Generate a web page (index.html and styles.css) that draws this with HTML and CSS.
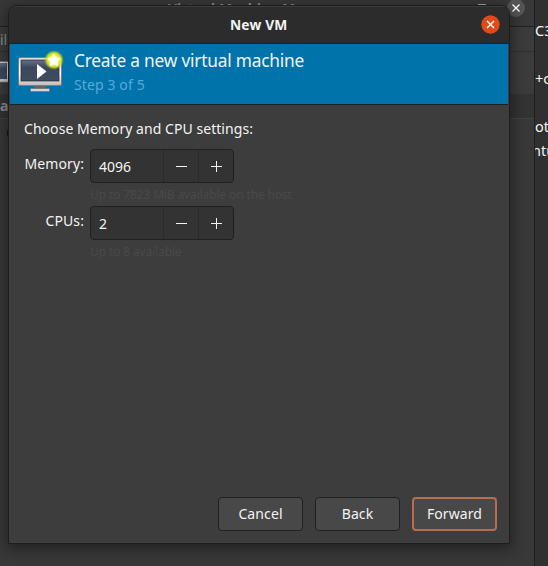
FILE: index.html
```
<!DOCTYPE html>
<html lang="en">
<head>
<meta charset="utf-8">
<title>New VM</title>
<link rel="stylesheet" href="styles.css">
</head>
<body>
<svg width="0" height="0" class="defs" aria-hidden="true">
  <defs>
    <linearGradient id="frame" x1="0" y1="0" x2="0" y2="1"><stop offset="0" stop-color="#dddddd"/><stop offset=".55" stop-color="#ffffff"/><stop offset="1" stop-color="#bdbdbd"/></linearGradient>
    <linearGradient id="screen" x1="0" y1="0" x2="0" y2="1"><stop offset="0" stop-color="#66728a"/><stop offset=".35" stop-color="#3c475c"/><stop offset="1" stop-color="#414c61"/></linearGradient>
    <radialGradient id="glow"><stop offset=".5" stop-color="#f2f53a"/><stop offset=".72" stop-color="#d9e41c" stop-opacity=".9"/><stop offset="1" stop-color="#a5c52d" stop-opacity="0"/></radialGradient>
    <symbol id="monitor" viewBox="0 0 48 44">
      <path d="M17 34h10l1 5H16z" fill="#666"/>
      <rect x="12.500" y="37.500" width="19" height="3" rx="1" fill="#d4d4d2" stroke="#777b7c"/>
      <rect x=".5" y="6.500" width="43" height="28" rx="1.500" fill="url(#frame)" stroke="#7b7d80"/>
      <rect x="3" y="9" width="38" height="21" fill="url(#screen)" stroke="#20293a" stroke-width=".7"/>
      <path d="M19 13v15l9.500-7.500z" fill="#fff"/>
    </symbol>
  </defs>
</svg>
<div class="desktop">
  <div class="terminal">
    <span>C3</span><span>+c</span><span>ot</span><span>ntu</span>
  </div>
  <section class="manager">
    <header class="manager-title"><span class="manager-name">Virtual Machine Manager</span><i class="minimize"></i>
      <svg class="manager-close" viewBox="0 0 18 18"><circle cx="9" cy="9" r="9"/><path d="M5.500 5.500l7 7m0-7l-7 7"/></svg>
    </header>
    <div class="manager-menu">il</div>
    <div class="manager-tools"><svg class="tool-monitor"><use href="#monitor"/></svg></div>
    <div class="manager-columns">a</div>
    <div class="manager-list">Q</div>
  </section>
  <main class="dialog">
    <header class="titlebar"><h1>New VM</h1>
      <svg class="close" viewBox="0 0 19 19"><circle cx="9.500" cy="9.500" r="9.200"/><path d="M6 6l7 7m0-7l-7 7"/></svg>
    </header>
    <div class="banner">
      <svg class="vm-icon" viewBox="0 0 48 44">
        <use href="#monitor"/>
        <circle cx="36" cy="9" r="10" fill="url(#glow)"/>
        <path d="M36 3l1.900 3.900 4.300.6-3.100 3 .7 4.300-3.800-2-3.800 2 .7-4.300-3.100-3 4.300-.6z" fill="#fff" stroke="#fff" stroke-linejoin="round"/>
      </svg>
      <div><h2>Create a new virtual machine</h2><p class="step">Step 3 of 5</p></div>
    </div>
    <div class="content">
      <p class="prompt">Choose Memory and CPU settings:</p>
      <div class="fields">
        <label>Memory:</label>
        <div class="spin"><span class="value">4096</span><span class="control minus"></span><span class="control plus"></span></div>
        <p class="hint">Up to 7823 MiB available on the host</p>
        <label>CPUs:</label>
        <div class="spin"><span class="value">2</span><span class="control minus"></span><span class="control plus"></span></div>
        <p class="hint">Up to 8 available</p>
      </div>
    </div>
    <footer class="actions">
      <button>Cancel</button><button>Back</button><button class="forward">Forward</button>
    </footer>
  </main>
</div>
</body>
</html>
```
FILE: styles.css
```
* { box-sizing: border-box; }
body { margin: 0; font-family: "Noto Sans", sans-serif; font-size: 14px; color: #f3f3f3; }
h1, h2, p { margin: 0; font-weight: 400; white-space: nowrap; }
.defs { position: absolute; }
.desktop { position: relative; width: 548px; height: 566px; overflow: hidden; background: #303030; }
.terminal { position: absolute; left: 535px; top: 18px; display: flex; flex-direction: column; font-size: 14.5px; line-height: 24px; }
.terminal span:nth-child(2) { margin-top: 24px; }
.terminal span:nth-child(3) { margin-top: 24px; }
.terminal span:nth-child(4) { margin-left: -3px; }
.manager { position: absolute; left: 0; top: 0; width: 535px; height: 566px; background: #383838; border-right: 1px solid #1e1e1e; overflow: hidden; color: #8d8d8d; }
.manager-title { position: relative; height: 27px; background: #383838; border-bottom: 1px solid #202020; }
.manager-name { position: absolute; left: 168px; top: 0; font-weight: 700; line-height: 18px; }
.minimize { position: absolute; left: 478px; top: 4px; width: 8px; height: 1px; background: #aaa; }
.manager-close { position: absolute; left: 507px; top: -1px; width: 18px; height: 18px; }
.manager-close circle { fill: #555; }
.manager-close path, .close path { fill: none; stroke: #fff; stroke-width: 1.4; }
.manager-menu { height: 25px; line-height: 25px; background: #3b3b3b; border-bottom: 1px solid #303030; }
.manager-tools { height: 42px; padding-top: 5px; background: #3b3b3b; }
.tool-monitor { display: block; width: 35px; height: 32px; margin-left: -23px; }
.manager-columns { height: 25px; line-height: 23px; background: #333; border-bottom: 1px solid #414141; font-weight: 700; }
.manager-list { padding: 4px 0 0 6px; color: #111; line-height: 19px; }
.dialog { position: absolute; left: 8px; top: 5px; width: 502px; height: 539px; display: flex; flex-direction: column; border: 1px solid #1d1d1d; border-radius: 9px 9px 0 0; background: #3d3d3d; box-shadow: 0 3px 14px 2px rgba(0,0,0,.4); overflow: hidden; }
.titlebar { display: flex; align-items: center; justify-content: flex-end; height: 38px; padding: 0 9px 2px 221px; background: #2c2c2c; border-top: 1px solid #3c3c3c; border-bottom: 1px solid #202020; }
.titlebar h1 { flex: 1; font-size: 13.8px; font-weight: 700; line-height: 20px; letter-spacing: .15px; padding-top: 1px; }
.close { width: 19px; height: 19px; }
.close circle { fill: #e14a19; }
.banner { display: flex; height: 61px; margin: 0 1px; padding: 8px 0 0 8px; background: #0073aa; border-bottom: 1px solid #202020; flex: none; }
.vm-icon { width: 48px; height: 44px; margin-right: 8px; flex: none; overflow: visible; margin-top: -1px; }
.banner h2 { font-size: 17.3px; line-height: 20px; margin-top: -1px; letter-spacing: -.2px; }
.step { font-size: 14px; line-height: 20px; margin-top: 4px; letter-spacing: .12px; color: #57a9d9; }
.content { flex: 1; padding: 14px 15px; }
.prompt { line-height: 20px; letter-spacing: .05px; }
.fields { display: grid; grid-template-columns: 60px 144px; column-gap: 6px; grid-template-rows: 34px 23px 34px 23px; margin-top: 10px; }
.fields label { text-align: right; line-height: 29px; letter-spacing: .1px; }
.spin { display: flex; align-items: center; border: 1px solid #202020; border-radius: 4px; background: #333; }
.value { flex: 1; padding-left: 8px; }
.control { position: relative; width: 35px; height: 32px; border-left: 1px solid #2b2b2b; }
.control::before, .plus::after { content: ""; position: absolute; left: 12px; top: 16px; width: 11px; height: 1px; background: #f3f3f3; }
.plus::after { left: 17px; top: 11px; width: 1px; height: 11px; }
.hint { grid-column: 2; width: 210px; padding-top: 1px; font-size: 12px; line-height: 22px; letter-spacing: -.13px; color: #494949; }
.actions { display: flex; justify-content: flex-end; gap: 12px; padding: 0 12px 12px; }
button { width: 85px; height: 34px; padding: 0 0 1px; border: 1px solid #202020; border-radius: 4px; background: #484848; color: #f3f3f3; font: 14px "Noto Sans", sans-serif; letter-spacing: .1px; }
.forward { border: 2px solid #bd6b50; }
```
